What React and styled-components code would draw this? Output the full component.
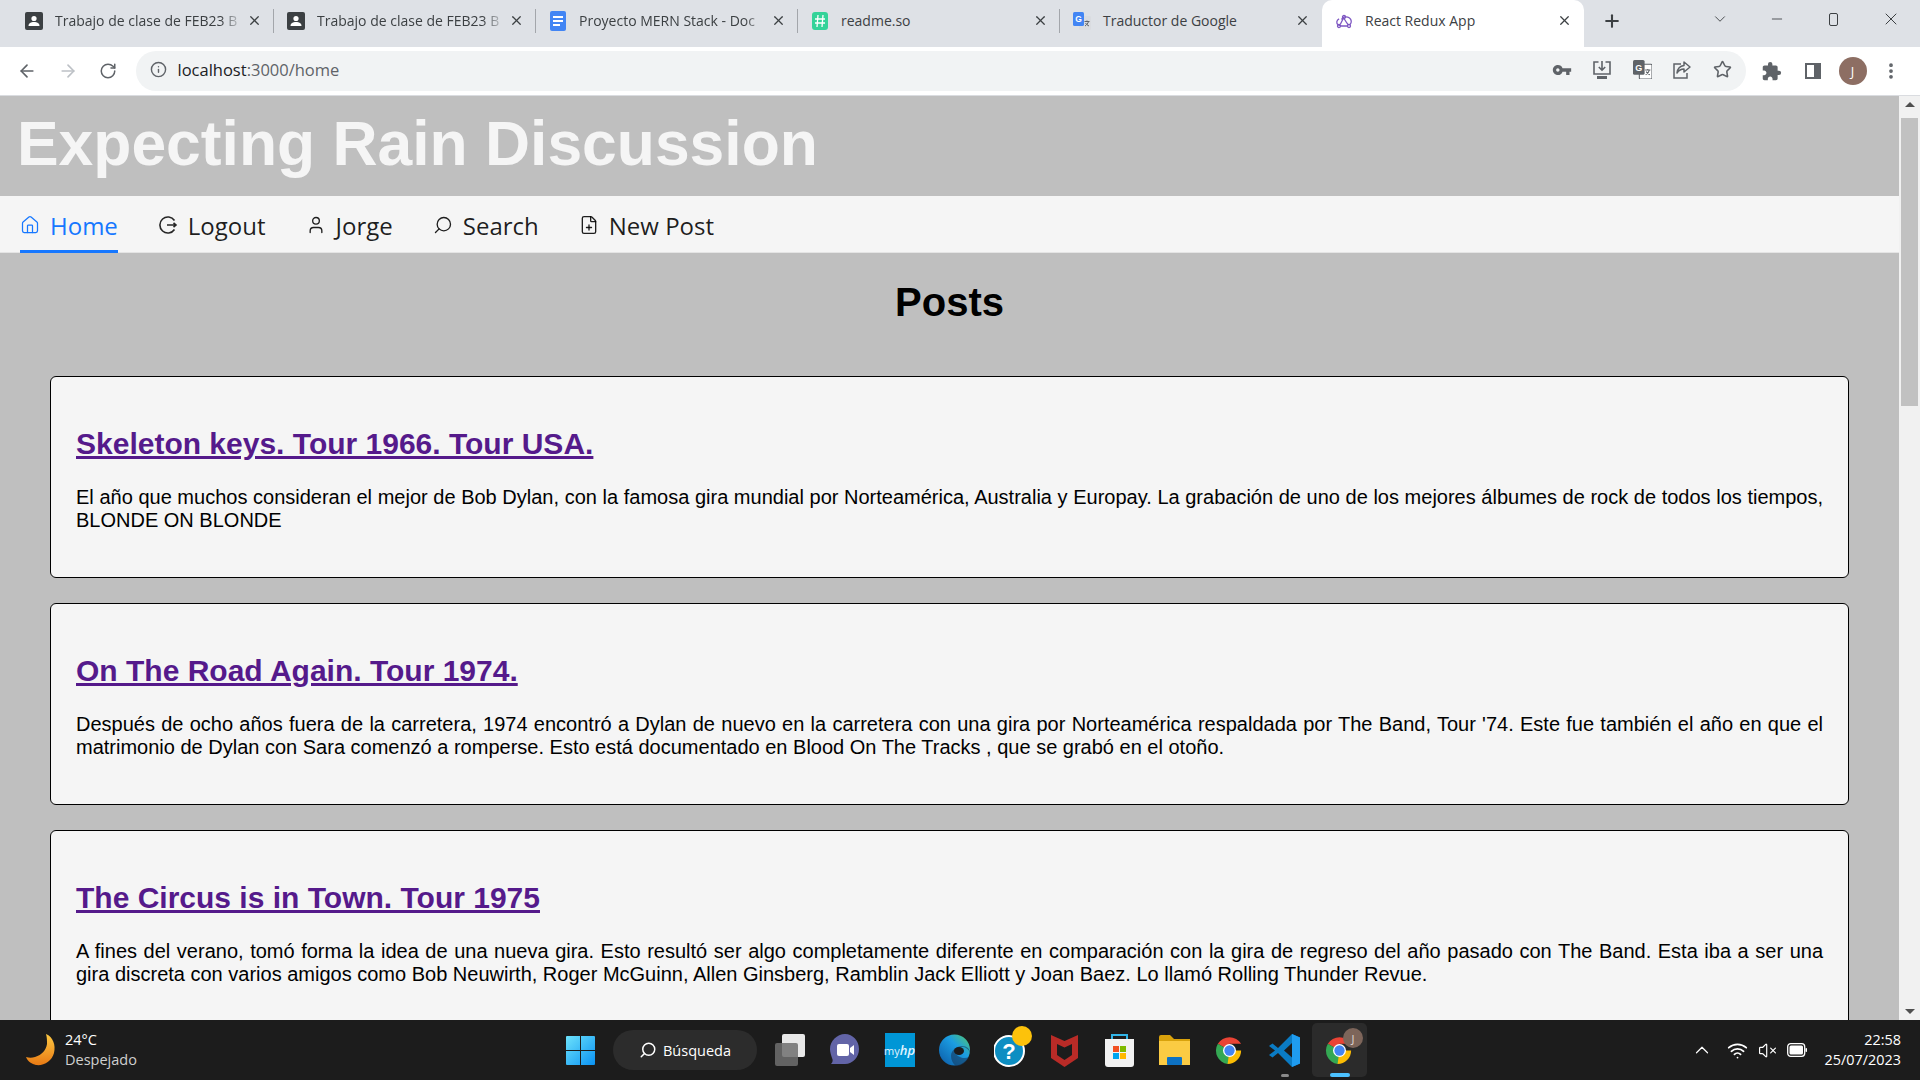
import styled, { createGlobalStyle } from "styled-components";
import { Home, User, FilePlus, Star, Info, ArrowLeft, ArrowRight, RotateCw, X, Plus, ChevronDown, Minus, ChevronUp, Search, EllipsisVertical, VolumeX, Wifi } from "lucide-react";
import { MdVpnKey, MdExtension } from "react-icons/md";

const GlobalStyle = createGlobalStyle`
  html, body { margin: 0; padding: 0; overflow: hidden; }
  body { font-family: "Liberation Sans", Arial, sans-serif; }
  * { box-sizing: border-box; }
`;

const DocIcon = () => (
  <svg width="16" height="20" viewBox="0 0 16 20">
    <rect width="16" height="20" rx="2" fill="#4285f4" />
    <path d="M3 6h10M3 10h10M3 14h7" stroke="#fff" strokeWidth="2" />
  </svg>
);

const ClassIcon = () => (
  <svg width="18" height="18" viewBox="0 0 18 18">
    <rect width="18" height="18" rx="2" fill="#3c4043" />
    <circle cx="9" cy="6.500" r="2.600" fill="#fff" />
    <path d="M3.500 14c0-3 2.500-4 5.500-4s5.500 1 5.500 4z" fill="#fff" />
  </svg>
);

const ReadmeIcon = () => (
  <svg width="16" height="18" viewBox="0 0 16 18">
    <rect width="16" height="18" rx="3" fill="#34d399" />
    <path d="M6 3 5 15M11 3l-1 12M3 7h10M3 11h10" stroke="#fff" strokeWidth="1.300" />
  </svg>
);

const TranslateIcon = ({ size = 18, mono }) => (
  <svg width={size} height={size} viewBox="0 0 18 18">
    <rect x="6" y="4" width="12" height="14" rx="1" fill={mono ? "#fff" : "#dadce0"} stroke={mono ? "#5f6368" : "none"} />
    <rect width="11" height="14" rx="1.500" fill={mono ? "#5f6368" : "#4285f4"} />
    <text x="2.200" y="10" fontSize="8.500" fontWeight="700" fill="#fff" fontFamily="Liberation Sans">G</text>
    <path d="M11.500 9.500h5M14 8.500v1M15.500 9.500c-.5 2-2 3.500-3.500 4.500M12.500 11c.7 1.200 2 2.400 3.500 3" stroke="#5f6368" strokeWidth="1" fill="none" />
  </svg>
);

const InstallIcon = () => (
  <svg width="20" height="20" viewBox="0 0 20 20" fill="none" stroke="#5f6368" strokeWidth="1.600">
    <path d="M6.500 2H2v12h16V2h-4.500" />
    <path d="M10 1v9M6.800 7 10 10.200 13.200 7" />
    <path d="M5 17.500h10" strokeWidth="3" />
  </svg>
);

const ShareIcon = () => (
  <svg width="20" height="20" viewBox="0 0 20 20" fill="none" stroke="#5f6368" strokeWidth="1.500">
    <path d="M9 4H2v14h13v-5" />
    <path d="M12 2l6 5-6 5V9c-3 0-5 1-7 4 .5-4 3-7 7-7.500z" strokeLinejoin="round" />
  </svg>
);

const ReduxIcon = () => (
  <svg width="18" height="18" viewBox="0 0 18 18" fill="none" stroke="#7e57c2" strokeWidth="1.300">
    <circle cx="9" cy="5" r="1.500" />
    <circle cx="4" cy="14" r="1.500" />
    <circle cx="14" cy="14" r="1.500" />
    <path d="M6.500 13.800c-2.500-.1-5-1.200-4.700-4 .2-1.500 1.300-2.500 2.300-3M9 6.500c1.200 2 2.800 4.500 4 6M5.200 12.500c1.200-2.500 2.400-4.500 3-6M15 12.500c2-2 1.500-5-.5-6.500-2.500-1.800-7-1.600-8 1.500M5.500 14h7" />
  </svg>
);

const LogoutIcon = () => (
  <svg width="20" height="20" viewBox="0 0 20 20" fill="none" stroke="#262626" strokeWidth="1.600">
    <path d="M16.500 5.500A8 8 0 1 0 16.500 14.500" />
    <path d="M9 10h9M15.500 7.800 18 10l-2.500 2.200" />
  </svg>
);

const SearchFlip = styled(Search)`
  transform: scaleX(-1);
`;

const PanelIcon = () => (
  <svg width="16" height="16" viewBox="0 0 16 16">
    <path fillRule="evenodd" d="M0 0h16v16H0zM2 2v12h7V2z" fill="#5f6368" />
  </svg>
);

const WindowsLogo = () => (
  <svg width="29" height="29" viewBox="0 0 29 29">
    <defs>
      <linearGradient id="winGrad" x1="0" y1="0" x2="1" y2="1">
        <stop offset="0" stopColor="#6de2fb" />
        <stop offset="1" stopColor="#0a92f3" />
      </linearGradient>
    </defs>
    <path d="M0 1a1 1 0 0 1 1-1h13v14H0zM15 0h13a1 1 0 0 1 1 1v13H15zM0 15h14v14H1a1 1 0 0 1-1-1zM15 15h14v13a1 1 0 0 1-1 1H15z" fill="url(#winGrad)" />
  </svg>
);

const Moon = () => (
  <svg width="30" height="32" viewBox="0 0 30 32">
    <defs>
      <linearGradient id="moonGrad" x1="0" y1="0" x2="0" y2="1">
        <stop offset="0" stopColor="#fdc943" />
        <stop offset="1" stopColor="#e87a14" />
      </linearGradient>
    </defs>
    <path d="M20 0c7 3 10 11 8 19-2 8-10 13-18 12-4-1-8-3-10-8 3 1 6 1 9 0 7-2 11-7 12-13 0-3 0-7-1-10z" fill="url(#moonGrad)" />
  </svg>
);

const TaskView = () => (
  <svg width="30" height="32" viewBox="0 0 30 32">
    <rect x="7" width="23" height="23" rx="2" fill="#e8e8e8" />
    <rect y="9" width="23" height="23" rx="2" fill="#6f6f6f" opacity=".85" />
  </svg>
);

const MeetIcon = () => (
  <svg width="30" height="32" viewBox="0 0 30 32">
    <path d="M15 0c8 0 14 7 14 15s-6 15-14 15H1c2-2 2-4 1-6C1 21 0 18 0 15 0 7 7 0 15 0z" fill="#6264a7" />
    <rect x="7" y="10" width="12" height="12" rx="2" fill="#fff" />
    <path d="M20 14l4-3v10l-4-3z" fill="#fff" />
  </svg>
);

const MyHpIcon = () => (
  <MyHp>
    my<b>hp</b>
  </MyHp>
);

const EdgeIcon = () => (
  <svg width="31" height="32" viewBox="0 0 31 32">
    <defs>
      <linearGradient id="edgeGrad" x1="0" y1="1" x2="1" y2="0">
        <stop offset="0" stopColor="#0c59a4" />
        <stop offset=".6" stopColor="#1b9de2" />
        <stop offset="1" stopColor="#54c969" />
      </linearGradient>
    </defs>
    <circle cx="15.500" cy="16" r="15.500" fill="url(#edgeGrad)" />
    <path d="M31 19c-2-6-8-7-12-5-3 2-3 6 0 8 3 2 7 3 11 1-3 6-8 9-13 9-3-2-5-6-5-10 0-6 6-10 11-10s8 3 8 7z" fill="#14395f" opacity=".6" />
    <ellipse cx="20" cy="17" rx="5" ry="4" fill="#1c1c1c" />
  </svg>
);

const HelpIcon = () => (
  <HelpWrap>
    <svg width="38" height="42" viewBox="0 0 38 42">
      <circle cx="15" cy="25" r="15" fill="#0d8ec2" stroke="#fff" strokeWidth="2" />
      <text x="15" y="33" fontSize="22" fontWeight="700" textAnchor="middle" fill="#fff" fontFamily="Liberation Sans">?</text>
      <circle cx="28" cy="10" r="10" fill="#fdc20b" />
    </svg>
  </HelpWrap>
);

const McafeeIcon = () => (
  <svg width="27" height="34" viewBox="0 0 27 34">
    <path d="M0 2l13.500 6L27 2v23l-13.500 9L0 25z" fill="#b92b27" />
    <path d="M6 11l7.500 3.500L21 11v11l-7.500 5L6 22z" fill="#1c1c1c" />
  </svg>
);

const StoreIcon = () => (
  <svg width="29" height="34" viewBox="0 0 29 34">
    <path d="M7 7V2h15v5" fill="none" stroke="#32b5e8" strokeWidth="2" />
    <path d="M0 6h29v25a3 3 0 0 1-3 3H3a3 3 0 0 1-3-3z" fill="#f2f2f2" />
    <rect x="8" y="13" width="6" height="6" fill="#f25022" />
    <rect x="15" y="13" width="6" height="6" fill="#7fba00" />
    <rect x="8" y="20" width="6" height="6" fill="#00a4ef" />
    <rect x="15" y="20" width="6" height="6" fill="#ffb900" />
  </svg>
);

const FolderIcon = () => (
  <svg width="31" height="30" viewBox="0 0 31 30">
    <path d="M0 2a2 2 0 0 1 2-2h9l4 4h16v6H0z" fill="#d9a20c" />
    <path d="M0 6h31v24H0z" fill="#fbcb43" />
    <rect x="8" y="22" width="15" height="8" rx="1" fill="#0d72c4" />
  </svg>
);

const ChromeIcon = () => (
  <svg width="31" height="31" viewBox="0 0 48 48">
    <path d="M24 24 6 13.500A21 21 0 0 1 42 13.500H24z" fill="#ea4335" />
    <path d="M24 24 6 13.500A21 21 0 0 0 21 45l9-10z" fill="#34a853" />
    <path d="M24 24h18A21 21 0 0 1 21 45z" fill="#fbbc04" />
    <circle cx="24" cy="24" r="10" fill="#fff" />
    <circle cx="24" cy="24" r="8" fill="#4285f4" />
  </svg>
);

const VsCodeIcon = () => (
  <svg width="31" height="33" viewBox="0 0 31 33">
    <path d="M23 0l8 3.500v26L23 33 9 19l-5.500 4.500L0 21l6-4.500L0 12l3.500-2.500L9 14z" fill="#0a7bc4" />
    <path d="M23 0l8 3.500v26L23 33z" fill="#1f9cf0" />
    <path d="M23 9l-8 7.500 8 7z" fill="#1c1c1c" />
  </svg>
);

const BatteryIcon = () => (
  <svg width="20" height="14" viewBox="0 0 20 14">
    <rect x=".7" y=".7" width="17" height="12.600" rx="3" fill="none" stroke="#fff" strokeWidth="1.300" />
    <rect x="2.500" y="2.500" width="13.500" height="9" rx="1.500" fill="#fff" />
    <rect x="18.500" y="5" width="1.500" height="4" rx=".7" fill="#fff" />
  </svg>
);

const tabs = [
  { title: "Trabajo de clase de FEB23 B", icon: <ClassIcon />, sep: true },
  { title: "Trabajo de clase de FEB23 B", icon: <ClassIcon />, sep: true },
  { title: "Proyecto MERN Stack - Doc", icon: <DocIcon />, sep: true },
  { title: "readme.so", icon: <ReadmeIcon />, sep: true },
  { title: "Traductor de Google", icon: <TranslateIcon /> },
  { title: "React Redux App", icon: <ReduxIcon />, active: true },
];

const posts = [
  {
    title: "Skeleton keys. Tour 1966. Tour USA.",
    text: "El año que muchos consideran el mejor de Bob Dylan, con la famosa gira mundial por Norteamérica, Australia y Europay. La grabación de uno de los mejores álbumes de rock de todos los tiempos, BLONDE ON BLONDE",
  },
  {
    title: "On The Road Again. Tour 1974.",
    text: "Después de ocho años fuera de la carretera, 1974 encontró a Dylan de nuevo en la carretera con una gira por Norteamérica respaldada por The Band, Tour '74. Este fue también el año en que el matrimonio de Dylan con Sara comenzó a romperse. Esto está documentado en Blood On The Tracks , que se grabó en el otoño.",
  },
  {
    title: "The Circus is in Town. Tour 1975",
    text: "A fines del verano, tomó forma la idea de una nueva gira. Esto resultó ser algo completamente diferente en comparación con la gira de regreso del año pasado con The Band. Esta iba a ser una gira discreta con varios amigos como Bob Neuwirth, Roger McGuinn, Allen Ginsberg, Ramblin Jack Elliott y Joan Baez. Lo llamó Rolling Thunder Revue.",
  },
];

const menu = [
  { label: "Home", icon: <Home size={20} strokeWidth={1.500} />, active: true },
  { label: "Logout", icon: <LogoutIcon /> },
  { label: "Jorge", icon: <User size={20} strokeWidth={1.600} /> },
  { label: "Search", icon: <SearchFlip size={20} strokeWidth={1.600} /> },
  { label: "New Post", icon: <FilePlus size={20} strokeWidth={1.600} /> },
];

const App = () => {
  return (
    <Screen>
      <GlobalStyle />
      <TabBar>
        {tabs.map((tab, i) => (
          <Tab key={i} $active={tab.active} $sep={tab.sep}>
            <Favicon>{tab.icon}</Favicon>
            <TabTitle $fade={tab.title.length > 20}>{tab.title}</TabTitle>
            <X size={15} strokeWidth={2} color="#3c4043" />
          </Tab>
        ))}
        <NewTab>
          <Plus size={20} strokeWidth={2.500} color="#3c4043" />
        </NewTab>
        <WindowControls>
          <WinBtn><ChevronDown size={18} strokeWidth={1.200} /></WinBtn>
          <WinBtn><Minus size={16} strokeWidth={1.300} /></WinBtn>
          <WinBtn>
            <MaxIcon />
          </WinBtn>
          <WinBtn><X size={20} strokeWidth={1.200} /></WinBtn>
        </WindowControls>
      </TabBar>

      <Toolbar>
        <NavBtn><ArrowLeft size={20} strokeWidth={2} color="#5f6368" /></NavBtn>
        <NavBtn><ArrowRight size={20} strokeWidth={2} color="#bdc1c6" /></NavBtn>
        <NavBtn><RotateCw size={18} strokeWidth={2} color="#5f6368" /></NavBtn>
        <Omnibox>
          <Info size={17} strokeWidth={2} color="#5f6368" />
          <Url>localhost<span>:3000/home</span></Url>
          <OmniIcons>
            <MdVpnKey size={20} color="#5f6368" />
            <InstallIcon />
            <TranslateIcon size={19} mono />
            <ShareIcon />
            <Star size={19} strokeWidth={2} color="#5f6368" />
          </OmniIcons>
        </Omnibox>
        <ToolRight>
          <MdExtension size={21} color="#5f6368" />
          <PanelIcon />
          <Avatar>J</Avatar>
          <EllipsisVertical size={20} strokeWidth={2.500} color="#5f6368" />
        </ToolRight>
      </Toolbar>

      <Viewport>
        <Page>
          <Header>
            <SiteTitle>Expecting Rain Discussion</SiteTitle>
          </Header>
          <Menu>
            {menu.map((item) => (
              <MenuItem key={item.label} $active={item.active}>
                {item.icon}
                <span>{item.label}</span>
              </MenuItem>
            ))}
          </Menu>
          <Heading>Posts</Heading>
          <PostList>
            {posts.map((post) => (
              <Card key={post.title}>
                <PostTitle href="#">{post.title}</PostTitle>
                <PostText>{post.text}</PostText>
              </Card>
            ))}
          </PostList>
        </Page>
        <Scrollbar>
          <ScrollArrow><Triangle /></ScrollArrow>
          <ScrollTrack><ScrollThumb /></ScrollTrack>
          <ScrollArrow><Triangle $down /></ScrollArrow>
        </Scrollbar>
      </Viewport>

      <Taskbar>
        <Weather>
          <Moon />
          <WeatherText>
            <span>24°C</span>
            <small>Despejado</small>
          </WeatherText>
        </Weather>
        <TaskCenter>
          <TaskCell><WindowsLogo /></TaskCell>
          <SearchPill>
            <SearchFlip size={18} strokeWidth={2} />
            Búsqueda
          </SearchPill>
          <TaskCell><TaskView /></TaskCell>
          <TaskCell><MeetIcon /></TaskCell>
          <TaskCell><MyHpIcon /></TaskCell>
          <TaskCell><EdgeIcon /></TaskCell>
          <TaskCell><HelpIcon /></TaskCell>
          <TaskCell><McafeeIcon /></TaskCell>
          <TaskCell><StoreIcon /></TaskCell>
          <TaskCell><FolderIcon /></TaskCell>
          <TaskCell><ChromeIcon /></TaskCell>
          <TaskCell>
            <VsCodeIcon />
            <RunDot />
          </TaskCell>
          <ActiveCell>
            <ChromeIcon />
            <MiniAvatar>J</MiniAvatar>
            <ActiveBar />
          </ActiveCell>
        </TaskCenter>
        <Tray>
          <ChevronUp size={22} strokeWidth={1.300} />
          <Wifi size={21} strokeWidth={2} />
          <VolumeX size={19} strokeWidth={1.500} />
          <BatteryIcon />
          <Clock>
            <span>22:58</span>
            <span>25/07/2023</span>
          </Clock>
        </Tray>
      </Taskbar>
    </Screen>
  );
};

const Screen = styled.div`
  width: 1920px;
  height: 1080px;
  display: flex;
  flex-direction: column;
  overflow: hidden;
`;

const TabBar = styled.div`
  height: 47px;
  flex: none;
  display: flex;
  padding-left: 12px;
  background-color: #dee1e6;
  font-family: "Open Sans", sans-serif;
`;

const Tab = styled.div`
  position: relative;
  width: 262px;
  height: 47px;
  padding: 0 12px 6px 13px;
  display: flex;
  align-items: center;
  gap: 12px;
  background-color: ${(p) => (p.$active ? "#fff" : "transparent")};
  border-radius: ${(p) => (p.$active ? "10px 10px 0 0" : "0")};

  &::after {
    content: "";
    display: ${(p) => (p.$sep ? "block" : "none")};
    position: absolute;
    top: 9px;
    right: 0;
    width: 1px;
    height: 24px;
    background-color: #a3a6ab;
  }
`;

const Favicon = styled.div`
  width: 18px;
  flex: none;
  display: flex;
  justify-content: center;
`;

const TabTitle = styled.div`
  flex: 1;
  margin-right: -8px;
  white-space: nowrap;
  font-size: 14px;
  color: #3c4043;
  mask-image: ${(p) => (p.$fade ? "linear-gradient(to right, #000 88%, transparent 100%)" : "none")};
`;

const NewTab = styled.div`
  width: 55px;
  padding-bottom: 5px;
  display: flex;
  align-items: center;
  justify-content: center;
`;

const WindowControls = styled.div`
  margin-left: auto;
  padding: 0 1px 0 0;
  display: flex;
  height: 38px;
  color: #3c4043;
`;

const WinBtn = styled.div`
  width: 57px;
  display: flex;
  align-items: center;
  justify-content: center;
`;

const MaxIcon = styled.div`
  width: 9px;
  height: 13px;
  border: 1.500px solid #3c4043;
  border-radius: 2px;
`;

const Toolbar = styled.div`
  height: 49px;
  flex: none;
  display: flex;
  align-items: center;
  padding-left: 7px;
  background-color: #fff;
  border-bottom: 1px solid #dadce0;
`;

const NavBtn = styled.div`
  width: 40.500px;
  display: flex;
  justify-content: center;
`;

const Omnibox = styled.div`
  width: 1610px;
  height: 40px;
  margin-left: 7px;
  padding: 0 14px 3px 14px;
  display: flex;
  align-items: center;
  gap: 11px;
  background-color: #f1f3f4;
  border-radius: 20px;
`;

const Url = styled.div`
  flex: 1;
  font-family: "Open Sans", sans-serif;
  font-size: 16.500px;
  color: #202124;

  span {
    color: #5f6368;
  }
`;

const OmniIcons = styled.div`
  display: flex;
  align-items: center;
  gap: 20.500px;
`;

const ToolRight = styled.div`
  display: flex;
  align-items: center;
  gap: 23px;
  padding-left: 15px;
`;

const Avatar = styled.div`
  width: 28px;
  height: 28px;
  border-radius: 50%;
  margin: 0 -9px 0 -5px;
  display: flex;
  align-items: center;
  justify-content: center;
  background-color: #8d6e63;
  color: #fff;
  font-family: "Open Sans", sans-serif;
  font-size: 13px;
`;

const Viewport = styled.div`
  flex: 1;
  min-height: 0;
  display: flex;
  overflow: hidden;
`;

const Page = styled.main`
  flex: 1;
  min-width: 0;
  background-color: #bfbfbf;
`;

const Header = styled.header`
  height: 100px;
  padding: 0 0 5px 17px;
  display: flex;
  align-items: center;
`;

const SiteTitle = styled.h1`
  margin: 0;
  font-size: 62.400px;
  font-weight: 700;
  color: #f5f5f5;
  white-space: nowrap;
`;

const Menu = styled.nav`
  height: 57px;
  padding: 0 20px;
  display: flex;
  gap: 40px;
  background-color: #f5f5f5;
  border-bottom: 1px solid #e4e4e4;
  font-family: "Open Sans", sans-serif;
  font-size: 24px;
`;

const MenuItem = styled.div`
  height: 57px;
  padding-top: 4px;
  display: flex;
  align-items: center;
  gap: 10px;
  color: ${(p) => (p.$active ? "#1677ff" : "rgba(0, 0, 0, 0.88)")};
  border-bottom: 3px solid ${(p) => (p.$active ? "#1677ff" : "transparent")};
`;

const Heading = styled.h2`
  margin: 26px 0 51px;
  text-align: center;
  font-size: 40px;
  line-height: 46px;
  color: #000;
`;

const PostList = styled.div`
  padding: 0 50px;
  display: flex;
  flex-direction: column;
  gap: 25px;
`;

const Card = styled.article`
  height: 202px;
  padding: 49px 25px 0;
  flex: none;
  border: 1px solid #000;
  border-radius: 6px;
  background-color: #f5f5f5;
`;

const PostTitle = styled.a`
  display: inline-block;
  font-size: 30px;
  line-height: 35px;
  font-weight: 700;
  color: #551a8b;
  text-decoration: underline;
`;

const PostText = styled.p`
  margin: 25px 0 0;
  font-size: 20px;
  line-height: 23px;
  text-align: justify;
  color: #000;
`;

const Scrollbar = styled.div`
  width: 21px;
  flex: none;
  display: flex;
  flex-direction: column;
  background-color: #f1f1f1;
`;

const ScrollArrow = styled.div`
  height: 17px;
  flex: none;
  display: flex;
  align-items: center;
  justify-content: center;
`;

const Triangle = styled.div`
  width: 0;
  height: 0;
  border-left: 5px solid transparent;
  border-right: 5px solid transparent;
  border-bottom: ${(p) => (p.$down ? "0" : "5px solid #505050")};
  border-top: ${(p) => (p.$down ? "5px solid #505050" : "0")};
`;

const ScrollTrack = styled.div`
  flex: 1;
  padding: 5px 2px 0;
`;

const ScrollThumb = styled.div`
  height: 288px;
  background-color: #c1c1c1;
`;

const Taskbar = styled.footer`
  height: 60px;
  flex: none;
  display: grid;
  grid-template-columns: 1fr auto 1fr;
  align-items: center;
  background-color: #1c1c1c;
  color: #fff;
  font-family: "Open Sans", sans-serif;
`;

const Weather = styled.div`
  padding-left: 26px;
  display: flex;
  align-items: center;
  gap: 9px;
`;

const WeatherText = styled.div`
  display: flex;
  flex-direction: column;
  font-size: 14.500px;
  line-height: 20px;

  small {
    font-size: 14.500px;
    color: #d0d0d0;
  }
`;

const TaskCenter = styled.div`
  display: flex;
  align-items: center;
`;

const TaskCell = styled.div`
  position: relative;
  width: 55px;
  height: 54px;
  display: flex;
  align-items: center;
  justify-content: center;
`;

const ActiveCell = styled(TaskCell)`
  background-color: #2b2b2b;
  border-radius: 5px;
`;

const HelpWrap = styled.div`
  display: flex;
  margin: -6px 0 0 6px;
`;

const SearchPill = styled.div`
  width: 144px;
  height: 40px;
  margin: 0 5px;
  display: flex;
  align-items: center;
  justify-content: center;
  gap: 6px;
  background-color: #2c2c2c;
  border-radius: 20px;
  font-size: 14.500px;
`;

const MyHp = styled.div`
  width: 30px;
  height: 34px;
  display: flex;
  align-items: center;
  justify-content: center;
  background-color: #0096d6;
  font-size: 11px;
  color: #e0f4ff;

  b {
    font-size: 13px;
    font-style: italic;
    font-weight: 600;
  }
`;

const RunDot = styled.div`
  position: absolute;
  bottom: 0;
  left: 24px;
  width: 8px;
  height: 3px;
  border-radius: 2px;
  background-color: #8a8a8a;
`;

const ActiveBar = styled.div`
  position: absolute;
  bottom: 0;
  left: 18px;
  width: 20px;
  height: 4px;
  border-radius: 2px;
  background-color: #4cc2ff;
`;

const MiniAvatar = styled.div`
  position: absolute;
  top: 5px;
  right: 4px;
  width: 20px;
  height: 20px;
  border-radius: 50%;
  display: flex;
  align-items: center;
  justify-content: center;
  background-color: #7d655a;
  color: #e0d8d4;
  font-size: 11px;
`;

const Tray = styled.div`
  display: flex;
  align-items: center;
  justify-content: flex-end;
  gap: 10px;
  padding-right: 19px;

  > :first-child {
    margin-right: 4px;
  }
`;

const Clock = styled.div`
  margin-left: 8px;
  display: flex;
  flex-direction: column;
  align-items: flex-end;
  font-size: 14.400px;
  line-height: 20px;
`;

export default App;
